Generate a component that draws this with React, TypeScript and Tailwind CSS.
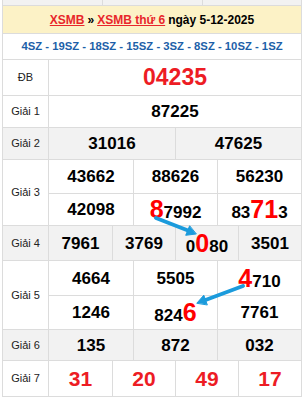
import type { ReactNode } from 'react'

const line = 'border-[#dcdcdc]'

function Big({ children }: { children: ReactNode }) {
  return <span className="text-[25px] text-[#ff0000] leading-none">{children}</span>
}

function Cell({ children, red, first }: { children: ReactNode; red?: boolean; first?: boolean }) {
  return (
    <div
      className={`flex items-center justify-center border-[#dcdcdc] ${first ? '' : 'border-l'} ${
        red ? 'text-[21px] text-[#ed1c24]' : 'text-[17px] text-black'
      } font-bold leading-none`}
    >
      <span className="flex items-baseline">{children}</span>
    </div>
  )
}

function Row({ label, grey, h, children }: { label: string; grey?: boolean; h: string; children: ReactNode }) {
  return (
    <div className={`flex border-b border-[#dcdcdc] ${h} ${grey ? 'bg-[#f2f2f2]' : 'bg-white'}`}>
      <div className="w-[46px] shrink-0 flex items-center justify-center border-r border-[#dcdcdc] text-[11px] text-[#222]">
        {label}
      </div>
      <div className="flex-1">{children}</div>
    </div>
  )
}

export default function App() {
  return (
    <div className="relative w-[304px] h-[399px] bg-white font-['Liberation_Sans',Arial,sans-serif] overflow-hidden">
      <div className={`ml-[2px] w-[300px] border-x ${line}`}>
        {/* cut-off table above */}
        <div className={`grid grid-cols-3 h-[6px] bg-[#f2f2f2] border-b ${line}`}>
          <div />
          <div className={`border-l ${line}`} />
          <div className={`border-l ${line}`} />
        </div>

        {/* title */}
        <div className={`h-[28px] flex items-center justify-center bg-[#fcf2c6] border-b ${line} text-[12px] font-bold`}>
          <a className="text-[#e8262b] underline">XSMB</a>
          <span className="mx-[3px] text-black">»</span>
          <a className="text-[#e8262b] underline">XSMB thứ 6</a>
          <span className="ml-[3px] text-black">ngày 5-12-2025</span>
        </div>

        <div className={`h-[26px] flex items-center justify-center border-b ${line} text-[11.3px] font-bold text-[#1d5fa8]`}>
          4SZ - 19SZ - 18SZ - 15SZ - 3SZ - 8SZ - 10SZ - 1SZ
        </div>

        <Row label="ĐB" h="h-[36px]">
          <div className="h-full flex items-center justify-center">
            <span className="text-[23px] font-bold text-[#ed1c24] leading-none">04235</span>
          </div>
        </Row>

        <Row label="Giải 1" h="h-[32px]">
          <div className="grid grid-cols-1 h-full">
            <Cell first>87225</Cell>
          </div>
        </Row>

        <Row label="Giải 2" grey h="h-[32px]">
          <div className="grid grid-cols-2 h-full">
            <Cell first>31016</Cell>
            <Cell>47625</Cell>
          </div>
        </Row>

        <Row label="Giải 3" h="h-[66px]">
          <div className="grid grid-cols-3 grid-rows-2 h-full">
            <Cell first>43662</Cell>
            <Cell>88626</Cell>
            <Cell>56230</Cell>
            <div className={`col-span-3 grid grid-cols-3 border-t ${line}`}>
              <Cell first>42098</Cell>
              <Cell>
                <Big>8</Big>7992
              </Cell>
              <Cell>
                83<Big>71</Big>3
              </Cell>
            </div>
          </div>
        </Row>

        <Row label="Giải 4" grey h="h-[35px]">
          <div className="grid grid-cols-4 h-full">
            <Cell first>7961</Cell>
            <Cell>3769</Cell>
            <Cell>
              0<Big>0</Big>80
            </Cell>
            <Cell>3501</Cell>
          </div>
        </Row>

        <Row label="Giải 5" h="h-[69px]">
          <div className="grid grid-cols-3 grid-rows-2 h-full">
            <Cell first>4664</Cell>
            <Cell>5505</Cell>
            <Cell>
              <Big>4</Big>710
            </Cell>
            <div className={`col-span-3 grid grid-cols-3 border-t ${line}`}>
              <Cell first>1246</Cell>
              <Cell>
                824<Big>6</Big>
              </Cell>
              <Cell>7761</Cell>
            </div>
          </div>
        </Row>

        <Row label="Giải 6" grey h="h-[31px]">
          <div className="grid grid-cols-3 h-full">
            <Cell first>135</Cell>
            <Cell>872</Cell>
            <Cell>032</Cell>
          </div>
        </Row>

        <Row label="Giải 7" h="h-[36px]">
          <div className="grid grid-cols-4 h-full">
            <Cell first red>31</Cell>
            <Cell red>20</Cell>
            <Cell red>49</Cell>
            <Cell red>17</Cell>
          </div>
        </Row>
      </div>

      {/* arrows drawn over the table */}
      <svg className="absolute inset-0 pointer-events-none" width="304" height="399" viewBox="0 0 304 399">
        <g stroke="#1b9bdc" strokeWidth="4" strokeLinecap="round" fill="#1b9bdc">
          <line x1="156" y1="218" x2="188" y2="230.5" />
          <polygon points="196,234 185.7,235.3 189.5,226.1" strokeWidth="1" strokeLinejoin="round" />
          <line x1="243" y1="286" x2="205.5" y2="300" />
          <polygon points="197,303 203.8,295.2 207.2,304.6" strokeWidth="1" strokeLinejoin="round" />
        </g>
      </svg>
    </div>
  )
}
